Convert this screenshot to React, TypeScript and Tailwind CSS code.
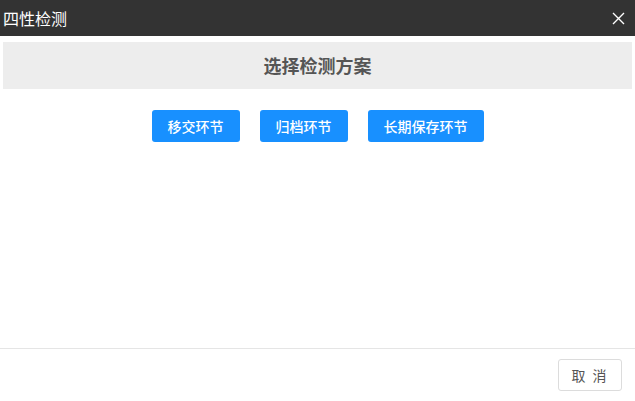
import React from 'react';

const options = ['移交环节', '归档环节', '长期保存环节'];

const App: React.FC = () => {
  return (
    <div
      className="w-[635px] h-[401px] bg-white flex flex-col"
      style={{ fontFamily: '"Noto Sans CJK SC", "Noto Sans", sans-serif' }}
    >
      <div className="h-[36px] bg-[#333333] flex items-center justify-between pl-[3px] pr-[10px]">
        <span className="text-white text-[16px] leading-none">四性检测</span>
        <svg width="13" height="13" viewBox="0 0 13 13" className="text-white">
          <path d="M1 1L12 12M12 1L1 12" stroke="currentColor" strokeWidth="1.4" />
        </svg>
      </div>
      <div className="flex-1 flex flex-col px-[3px] pt-[6px]">
        <div className="h-[47px] bg-[#ededed] flex items-center justify-center">
          <span className="text-[#555555] text-[18px] font-bold">选择检测方案</span>
        </div>
        <div className="flex justify-center gap-[20px] mt-[21px]">
          {options.map((o) => (
            <button
              key={o}
              className="h-[32px] px-[16px] rounded-[3px] bg-[#1890ff] text-white text-[14px] font-medium"
            >
              {o}
            </button>
          ))}
        </div>
      </div>
      <div className="h-[53px] border-t border-[#e5e5e5] flex items-center justify-end pr-[13px]">
        <button className="w-[64px] h-[32px] border border-[#dcdcdc] rounded-[3px] text-[#555555] text-[14px] bg-white tracking-[2px]">
          取 消
        </button>
      </div>
    </div>
  );
};

export default App;
